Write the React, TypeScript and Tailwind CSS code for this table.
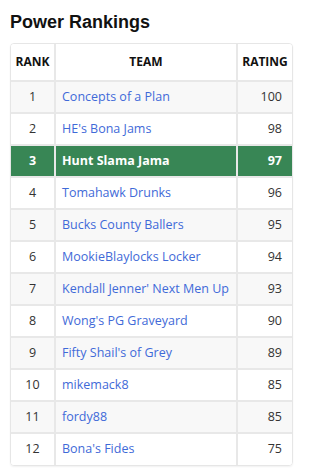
const teams = [
  { rank: 1, name: 'Concepts of a Plan', rating: 100 },
  { rank: 2, name: "HE's Bona Jams", rating: 98 },
  { rank: 3, name: 'Hunt Slama Jama', rating: 97, mine: true },
  { rank: 4, name: 'Tomahawk Drunks', rating: 96 },
  { rank: 5, name: 'Bucks County Ballers', rating: 95 },
  { rank: 6, name: 'MookieBlaylocks Locker', rating: 94 },
  { rank: 7, name: "Kendall Jenner' Next Men Up", rating: 93 },
  { rank: 8, name: "Wong's PG Graveyard", rating: 90 },
  { rank: 9, name: "Fifty Shail's of Grey", rating: 89 },
  { rank: 10, name: 'mikemack8', rating: 85 },
  { rank: 11, name: 'fordy88', rating: 85 },
  { rank: 12, name: "Bona's Fides", rating: 75 },
];

export default function App() {
  return (
    <div className="w-[311px] h-[469px] bg-white px-[10px] pt-[11px]">
      <h2 className="text-[18px] leading-[22px] font-bold text-[#111] mb-[10px] font-['Liberation_Sans',Arial,sans-serif]">
        Power Rankings
      </h2>
      <div className="w-[283px] rounded-[4px] border border-[#e6e6e6] overflow-hidden shadow-[0_1px_2px_rgba(0,0,0,0.06)]">
        <table className="w-full border-collapse text-[12.5px] font-['Open_Sans',sans-serif]">
          <thead>
            <tr className="h-[37px] bg-white">
              <th className="w-[44px] border-r-2 border-b-2 border-[#e8e8e8] text-[12px] font-bold text-[#111]">RANK</th>
              <th className="border-r-2 border-b-2 border-[#e8e8e8] text-[12px] font-bold text-[#111]">TEAM</th>
              <th className="w-[55px] border-b-2 border-[#e8e8e8] text-[12px] font-bold text-[#111]">RATING</th>
            </tr>
          </thead>
          <tbody>
            {teams.map((t, i) => {
              const rowBg = t.mine ? 'bg-[#388655]' : i % 2 === 0 ? 'bg-[#f8f8f8]' : 'bg-white';
              const last = i === teams.length - 1;
              return (
                <tr key={t.rank} className={`h-[32px] ${rowBg}`}>
                  <td className={`text-center border-r-2 border-[#e8e8e8] ${last ? '' : 'border-b-2'} ${t.mine ? 'text-white font-bold' : 'text-[#333]'}`}>
                    {t.rank}
                  </td>
                  <td className={`pl-[6px] border-r-2 border-[#e8e8e8] whitespace-nowrap ${last ? '' : 'border-b-2'} ${t.mine ? 'text-white font-bold' : 'text-[#3f6ad8]'}`}>
                    {t.name}
                  </td>
                  <td className={`text-right pr-[10px] border-[#e8e8e8] ${last ? '' : 'border-b-2'} ${t.mine ? 'text-white font-bold' : 'text-[#333]'}`}>
                    {t.rating}
                  </td>
                </tr>
              );
            })}
          </tbody>
        </table>
      </div>
    </div>
  );
}
